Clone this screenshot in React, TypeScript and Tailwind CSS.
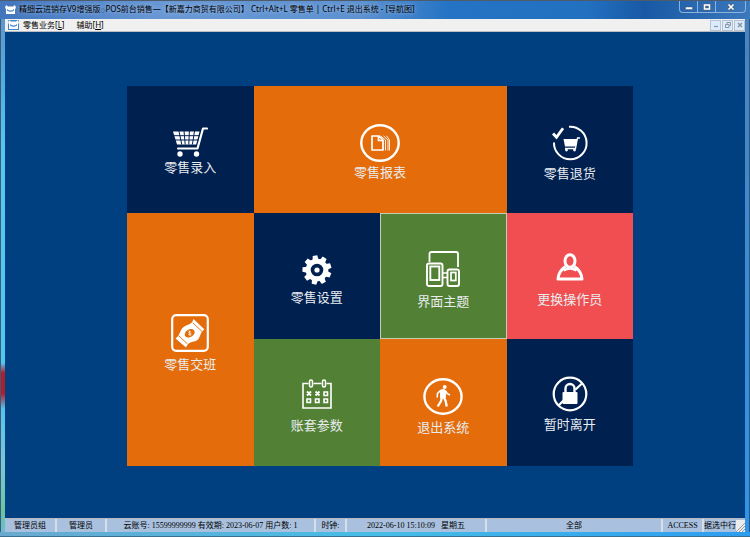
import React from 'react';

const CartIcon = () => (
  <svg className="w-9 h-[30px]" viewBox="0 0 36 30" fill="none" stroke="white">
    <path d="M35 1.5h-4L25.5 21.5H6" strokeWidth="2.2" strokeLinecap="round" strokeLinejoin="round" />
    <path d="M1 4.500h26.500l-3.300 13H5z" fill="white" stroke="none" />
    <path d="M1 8.700h27M2 13h25M6.800 3.500l3 14M12 3.500l1.200 14M17.400 3.500l-.6 14M22.600 3.500l-2.200 14" stroke="#002050" strokeWidth="1" />
    <circle cx="8" cy="27" r="2.700" fill="white" stroke="none" />
    <circle cx="24.500" cy="27" r="2.700" fill="white" stroke="none" />
  </svg>
);

const ReportIcon = () => (
  <svg className="w-10 h-[38px]" viewBox="0 0 40 38" fill="none" stroke="white">
    <ellipse cx="20" cy="19" rx="18.700" ry="17.700" strokeWidth="2.400" />
    <path d="M12 12h7l4 4v10H12z M18.500 12v4.500H23" strokeWidth="1.700" strokeLinejoin="round" />
    <path d="M20.500 11.800l5 4.200v10.500M23.500 11.800l4.500 4.200v10.500M26.500 11.800l3 4.200v10.500" strokeWidth=".9" />
  </svg>
);

const ReturnIcon = () => (
  <svg className="w-9 h-9" viewBox="0 0 36 36" fill="none" stroke="white">
    <path d="M17 1.800A16.300 16.300 0 1 1 2 17.500" strokeWidth="2" />
    <path d="M1 8.500l3.500 3.800 6.500-9" strokeWidth="2.800" />
    <path d="M11.500 14h13.800l-1.500 7.500H13z" fill="white" stroke="none" />
    <path d="M28 13h-2.500L23.500 23.500H13" strokeWidth="1.300" />
    <circle cx="14.500" cy="25" r="1.400" fill="white" stroke="none" />
    <circle cx="22.500" cy="25" r="1.400" fill="white" stroke="none" />
  </svg>
);

const CashIcon = () => (
  <svg className="w-[38px] h-[38px]" viewBox="0 0 38 38" fill="none" stroke="white">
    <rect x="1.200" y="1.200" width="35.600" height="35.600" rx="4" strokeWidth="2.200" />
    <path d="M4.500 24.500C9 21.500 8.500 17 12 13.500S20.500 12 22.500 5L33.500 15.500C29 18 30 22 27 25.500S18 26 15 33.500z" fill="white" stroke="none" />
    <path d="M7.500 21.500l9 8.500M22 9l9 8.500" stroke="#e46c0a" strokeWidth=".9" />
    <ellipse cx="18.700" cy="19.300" rx="5.300" ry="3.800" transform="rotate(-30 18.700 19.300)" fill="#e46c0a" stroke="none" />
    <path d="M20.300 18c-1.300-1.200-3-.3-2.600.6s2.600.2 2.400 1.400-2 1.200-2.900.2M18.200 16.500l1 5.500" strokeWidth=".7" />
  </svg>
);

const GearIcon = () => (
  <svg className="w-[30px] h-[30px]" viewBox="0 0 30 30" fill="white">
    <circle cx="15" cy="15" r="8.800" fill="none" stroke="white" strokeWidth="5" />
    {[0, 40, 80, 120, 160, 200, 240, 280, 320].map((a) => (
      <path key={a} d="M12 5L12.700 .5h4.600L18 5z" transform={`rotate(${a - 8} 15 15)`} />
    ))}
    <circle cx="15" cy="15" r="2.600" />
  </svg>
);

const ThemeIcon = () => (
  <svg className="w-[34px] h-9" viewBox="0 0 34 36" fill="none" stroke="white">
    <path d="M3.500 11V3q0-2 2-2H30q2 0 2 2v13" strokeWidth="1.800" />
    <rect x="1" y="12.500" width="15.500" height="22.500" rx="2" strokeWidth="1.900" />
    <rect x="4.300" y="15.500" width="9" height="13.500" strokeWidth="1.900" />
    <rect x="21.500" y="18.500" width="11.500" height="16.500" rx="2" strokeWidth="1.900" />
    <rect x="25" y="21.500" width="4.800" height="8" strokeWidth="1.700" />
    <path d="M16 22h5.500M16 26.500h5.500" strokeWidth="1.500" />
  </svg>
);

const UserIcon = () => (
  <svg className="w-7 h-7" viewBox="0 0 28 28" fill="none" stroke="white" strokeWidth="3">
    <ellipse cx="14" cy="8" rx="5" ry="6.300" />
    <path d="M9.500 13.500C5 16.500 2.500 20 2 26h24c-.5-6-3-9.500-7.500-12.500" strokeLinejoin="round" />
    <path d="M7.500 17.500q6.500-4 13 0" strokeWidth="2.400" />
  </svg>
);

const CalendarIcon = () => (
  <svg className="w-[30px] h-[30px]" viewBox="0 0 30 30" fill="none" stroke="white">
    <path d="M6.500 4.500H1V29h28V4.500h-4.500M11.500 4.500h8" strokeWidth="1.600" />
    <rect x="7.500" y="1" width="3" height="7" rx="1.500" strokeWidth="1.500" />
    <rect x="20.500" y="1" width="3" height="7" rx="1.500" strokeWidth="1.500" />
    <path d="M5 12.500l4 4m0-4l-4 4M13.500 12.500l4 4m0-4l-4 4" strokeWidth="1.800" />
    <path d="M22 13h3.500v3.500H22zM5 20h3.500v3.500H5zM13.500 20h3.500v3.500h-3.500zM22 20h3.500v3.500H22z" strokeWidth="1.600" />
  </svg>
);

const ExitIcon = () => (
  <svg className="w-10 h-[37px]" viewBox="0 0 40 37" fill="none" stroke="white">
    <ellipse cx="20" cy="18.500" rx="18.600" ry="17.200" strokeWidth="2.400" />
    <circle cx="21.700" cy="9" r="2" fill="white" stroke="none" />
    <path d="M17.500 12l3.500-.5 2 1.500-.8 7H17.500z" fill="white" />
    <path d="M17.500 12.500l-3 2.800-.3 4.200M22.500 13l1.800 2.700 2.700 1.300" strokeWidth="1.600" />
    <path d="M19 19l-1 4-3.300 5.500M20.700 19l2 4 1 5.500" strokeWidth="2.300" />
  </svg>
);

const LockIcon = () => (
  <svg className="w-9 h-9" viewBox="0 0 36 36" fill="none" stroke="white">
    <circle cx="18" cy="18" r="16.300" strokeWidth="2.200" />
    <path d="M6.500 29.500l5-5M23.500 13.500l6.500-6" strokeWidth="2.200" />
    <path d="M13.500 17v-4.500a4.500 4.500 0 0 1 9 0V17" strokeWidth="2.400" />
    <rect x="10.500" y="16" width="15" height="12" rx="1" fill="white" stroke="none" />
  </svg>
);

const AppIcon = () => (
  <svg className="w-[11px] h-2.5 shrink-0" viewBox="0 0 11 10">
    <path d="M1 0l2 1.500h5L10 0l1 3-1 1v5H1V4L0 3z" fill="white" />
    <path d="M2 4q3.500 3 7 0v1.500Q5.500 8 2 5.500z" fill="#3d87c7" />
  </svg>
);

const tiles = [
  { label: '零售录入', icon: <CartIcon />, style: 'bg-[#002050] gap-0.5 pb-1' },
  { label: '零售报表', icon: <ReportIcon />, style: 'bg-[#e46c0a] gap-0.5 pb-0.5 col-span-2' },
  { label: '零售退货', icon: <ReturnIcon />, style: 'bg-[#002050] gap-1' },
  { label: '零售交班', icon: <CashIcon />, style: 'bg-[#e46c0a] gap-1 row-span-2' },
  { label: '零售设置', icon: <GearIcon />, style: 'bg-[#002050] gap-1' },
  { label: '界面主题', icon: <ThemeIcon />, style: 'bg-[#528135] gap-1.5 border border-[#c3cdb9]' },
  { label: '更换操作员', icon: <UserIcon />, style: 'bg-[#f04e50] gap-2.5' },
  { label: '账套参数', icon: <CalendarIcon />, style: 'bg-[#528135] gap-2' },
  { label: '退出系统', icon: <ExitIcon />, style: 'bg-[#e46c0a] gap-1' },
  { label: '暂时离开', icon: <LockIcon />, style: 'bg-[#002050] gap-1 pb-1' },
];

const status = [
  { text: '管理员组', width: 'w-[52px]' },
  { text: '管理员', width: 'w-[50px]' },
  { text: '云账号: 15599999999 有效期: 2023-06-07 用户数: 1', width: 'w-[209px]' },
  { text: '时钟:', width: 'w-[31px]' },
  { text: '2022-06-10 15:10:09   星期五', width: 'w-[140px]' },
  { text: '全部', width: 'flex-1' },
  { text: 'ACCESS', width: 'w-[41px]' },
];

const App = () => {
  return (
    <div className="min-h-screen flex flex-col bg-[linear-gradient(90deg,#69a9cf,#46bde6_50%,#2d9cf0)] font-['Noto_Sans','Noto_Sans_CJK_SC',sans-serif] text-[8px] leading-3 text-black">
      {/* Title bar */}
      <header className="h-[19px] shrink-0 flex items-start justify-between border-t border-[#4d5b6b] bg-[linear-gradient(90deg,#4175bd,#6898d4_22%,#5d91d0_48%,#2473c4_60%,#2271c1_78%,#1859a5_86%,#3b79bd)]">
        <div className="flex items-center gap-[3px] pl-[5px] pt-0.5">
          <AppIcon />
          <h1 className="whitespace-nowrap [text-shadow:0_0_4px_#b8d0ee]">
            精细云进销存V9增强版<span className="text-[5px]">◇</span>POS前台销售—【新嘉力商贸有限公司】 Ctrl+Alt+L 零售单 | Ctrl+E 退出系统 - [导航图]
          </h1>
        </div>
        <div className="flex mr-1 h-3 border border-t-0 border-[#8eb2dc] rounded-b-sm divide-x divide-[#8eb2dc]">
          <button aria-label="最小化" className="w-[18px] flex justify-center items-center">
            <svg className="w-2 h-2" viewBox="0 0 8 8"><rect x=".5" y="4" width="7" height="2.500" fill="white" stroke="#44546a" strokeWidth=".5" /></svg>
          </button>
          <button aria-label="最大化" className="w-[18px] flex justify-center items-center">
            <svg className="w-2 h-2" viewBox="0 0 8 8" fill="none"><rect x="1.500" y="2" width="5" height="4" stroke="#44546a" strokeWidth="2.600" /><rect x="1.500" y="2" width="5" height="4" stroke="white" strokeWidth="1.600" /></svg>
          </button>
          <button aria-label="关闭" className="w-[29px] flex justify-center items-center">
            <svg className="w-2 h-2" viewBox="0 0 8 8"><path d="M1.500 1.500l5 5m0-5l-5 5" stroke="#44546a" strokeWidth="2.800" /><path d="M1.500 1.500l5 5m0-5l-5 5" stroke="white" strokeWidth="1.700" /></svg>
          </button>
        </div>
      </header>

      <div className="flex-1 flex items-stretch">
        {/* Glass frame, left */}
        <div className="w-[5px] shrink-0 border-l border-[#3d5b78] bg-[linear-gradient(180deg,#5e96cf,#4faee0_12%,#56c8ee_25%,#4fc9f2_67%,#b01e2c_69%,#b01e2c_73%,#52c4ee_76%,#7ac7d8_87%,#67c7a0_96%,#6dbcd4)]" />

        <div className="flex-1 min-w-0 flex flex-col">
          {/* Menu bar */}
          <nav className="h-[13px] shrink-0 flex items-center bg-[#f0f0f0] border-b border-[#b9bdc2] pl-[3px]">
            <span className="bg-[#3d87c7] flex"><AppIcon /></span>
            <button className="ml-1 whitespace-nowrap">零售业务[<u>L</u>]</button>
            <button className="ml-3 whitespace-nowrap">辅助[<u>H</u>]</button>
            <div className="ml-auto flex gap-px text-[#8497a8]">
              <button aria-label="最小化窗口" className="w-[11px] h-[11px] bg-[#dceafa] border border-[#b4c4d4] flex items-center justify-center">
                <svg className="w-1.5 h-1.5" viewBox="0 0 6 6"><path d="M1 4.500h4" stroke="currentColor" strokeWidth="1.200" /></svg>
              </button>
              <button aria-label="还原窗口" className="w-[11px] h-[11px] bg-[#dceafa] border border-[#b4c4d4] flex items-center justify-center">
                <svg className="w-1.5 h-1.5" viewBox="0 0 6 6" fill="none" stroke="currentColor"><path d="M2 2V.5h3.500v3H4M.5 2.500H4v3H.5z" /></svg>
              </button>
              <button aria-label="关闭窗口" className="w-[11px] h-[11px] bg-[#dceafa] border border-[#b4c4d4] flex items-center justify-center">
                <svg className="w-1.5 h-1.5" viewBox="0 0 6 6"><path d="M1 1l4 4m0-4L1 5" stroke="currentColor" strokeWidth="1.500" /></svg>
              </button>
            </div>
          </nav>

          {/* Navigation tiles */}
          <main className="flex-1 flex items-center justify-center bg-[#004080] pl-2.5 pt-0.5">
            <div className="grid grid-cols-4 grid-rows-3 w-full max-w-[506px] aspect-[4/3]">
              {tiles.map((tile) => (
                <button
                  key={tile.label}
                  className={`flex flex-col items-center justify-center pt-[7px] text-[13px] leading-4 text-[#e9ecef] ${tile.style}`}
                >
                  {tile.icon}
                  <span>{tile.label}</span>
                </button>
              ))}
            </div>
          </main>

          {/* Status bar */}
          <footer className="h-3.5 shrink-0 flex bg-[#a9c1de] border-t border-[#b5b8bc] font-['Liberation_Serif','Noto_Sans_CJK_SC',serif]">
            {status.map((cell) => (
              <div
                key={cell.text}
                className={`${cell.width} flex items-center justify-center whitespace-pre border-r-2 border-[#d5dfe9] overflow-hidden`}
              >
                {cell.text}
              </div>
            ))}
            <div className="w-[41px] flex items-center justify-between whitespace-nowrap">
              <span className="shrink-0">据选中行</span>
              <svg className="w-[9px] h-3 shrink-0 bg-[#ececec]" viewBox="0 0 9 12" stroke="#9a9a9a">
                <path d="M0 12l9-9M3 12l6-6M6 12l3-3" />
              </svg>
            </div>
          </footer>
        </div>

        {/* Glass frame, right */}
        <div className="w-[5px] shrink-0 border-r border-[#29577f] bg-[linear-gradient(180deg,#4a82bf,#3f8bd0_50%,#2f94ea)]" />
      </div>
      <div className="h-[5px] shrink-0 border-b border-[#3b6f90]" />
    </div>
  );
};

export default App;
